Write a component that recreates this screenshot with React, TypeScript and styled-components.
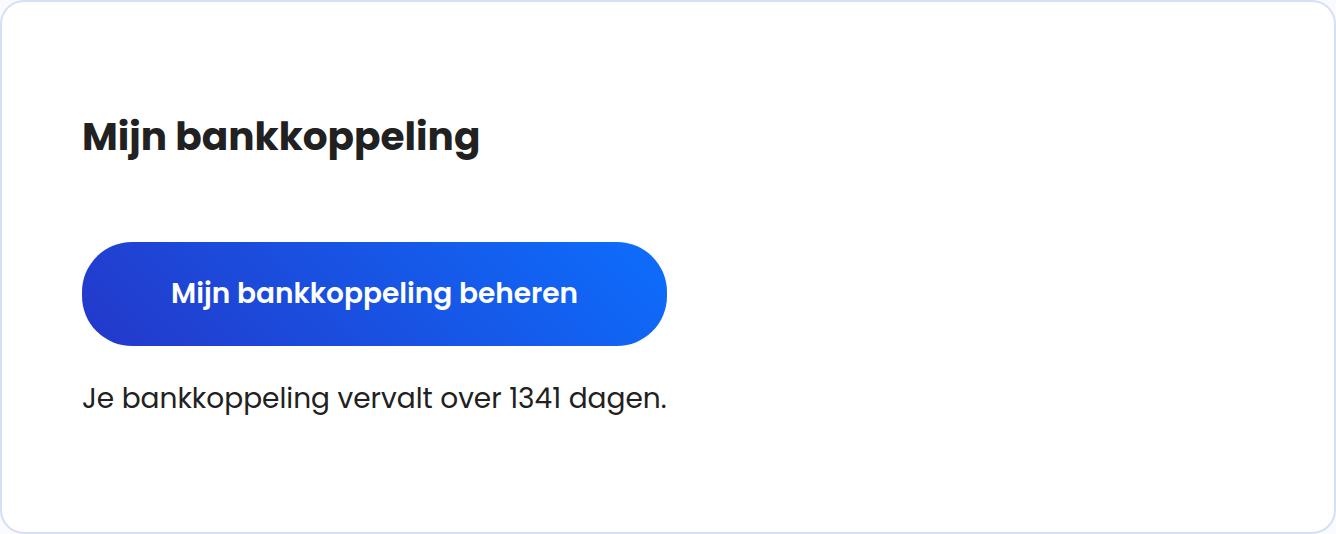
import React from "react"
import styled, { createGlobalStyle } from "styled-components"

const theme = {
  bg: "#f9fbff",
  card: "#ffffff",
  border: "#d5dff5",
  text: "#212121",
  primaryFrom: "#2438c9",
  primaryTo: "#0d6efd",
}

const GlobalStyle = createGlobalStyle`
  *, *::before, *::after {
    box-sizing: border-box;
  }

  body {
    margin: 0;
    background: ${theme.bg};
    color: ${theme.text};
    font-family: Poppins, Inter, "Open Sans", sans-serif;
    -webkit-font-smoothing: antialiased;
  }
`

const Card = styled.section`
  display: flex;
  flex-direction: column;
  align-items: flex-start;
  padding: 104px 80px 112px;
  background: ${theme.card};
  border: 2px solid ${theme.border};
  border-radius: 24px;
`

const Title = styled.h2`
  margin: 0 0 74px;
  font-size: 39px;
  font-weight: 700;
  line-height: 62px;
`

const ManageButton = styled.button`
  padding: 31px 89px;
  border: 0;
  border-radius: 50px;
  background: linear-gradient(
    45deg,
    ${theme.primaryFrom},
    ${theme.primaryTo}
  );
  color: #fff;
  font-family: inherit;
  font-size: 28px;
  font-weight: 600;
  line-height: 42px;
  cursor: pointer;
`

const Expiry = styled.p`
  margin: 32px 0 0;
  font-size: 28px;
  line-height: 42px;
`

const daysLeft = 1341

const App = () => (
  <>
    <GlobalStyle />
    <Card>
      <Title>Mijn bankkoppeling</Title>
      <ManageButton type="button">Mijn bankkoppeling beheren</ManageButton>
      <Expiry>Je bankkoppeling vervalt over {daysLeft} dagen.</Expiry>
    </Card>
  </>
)

export default App
